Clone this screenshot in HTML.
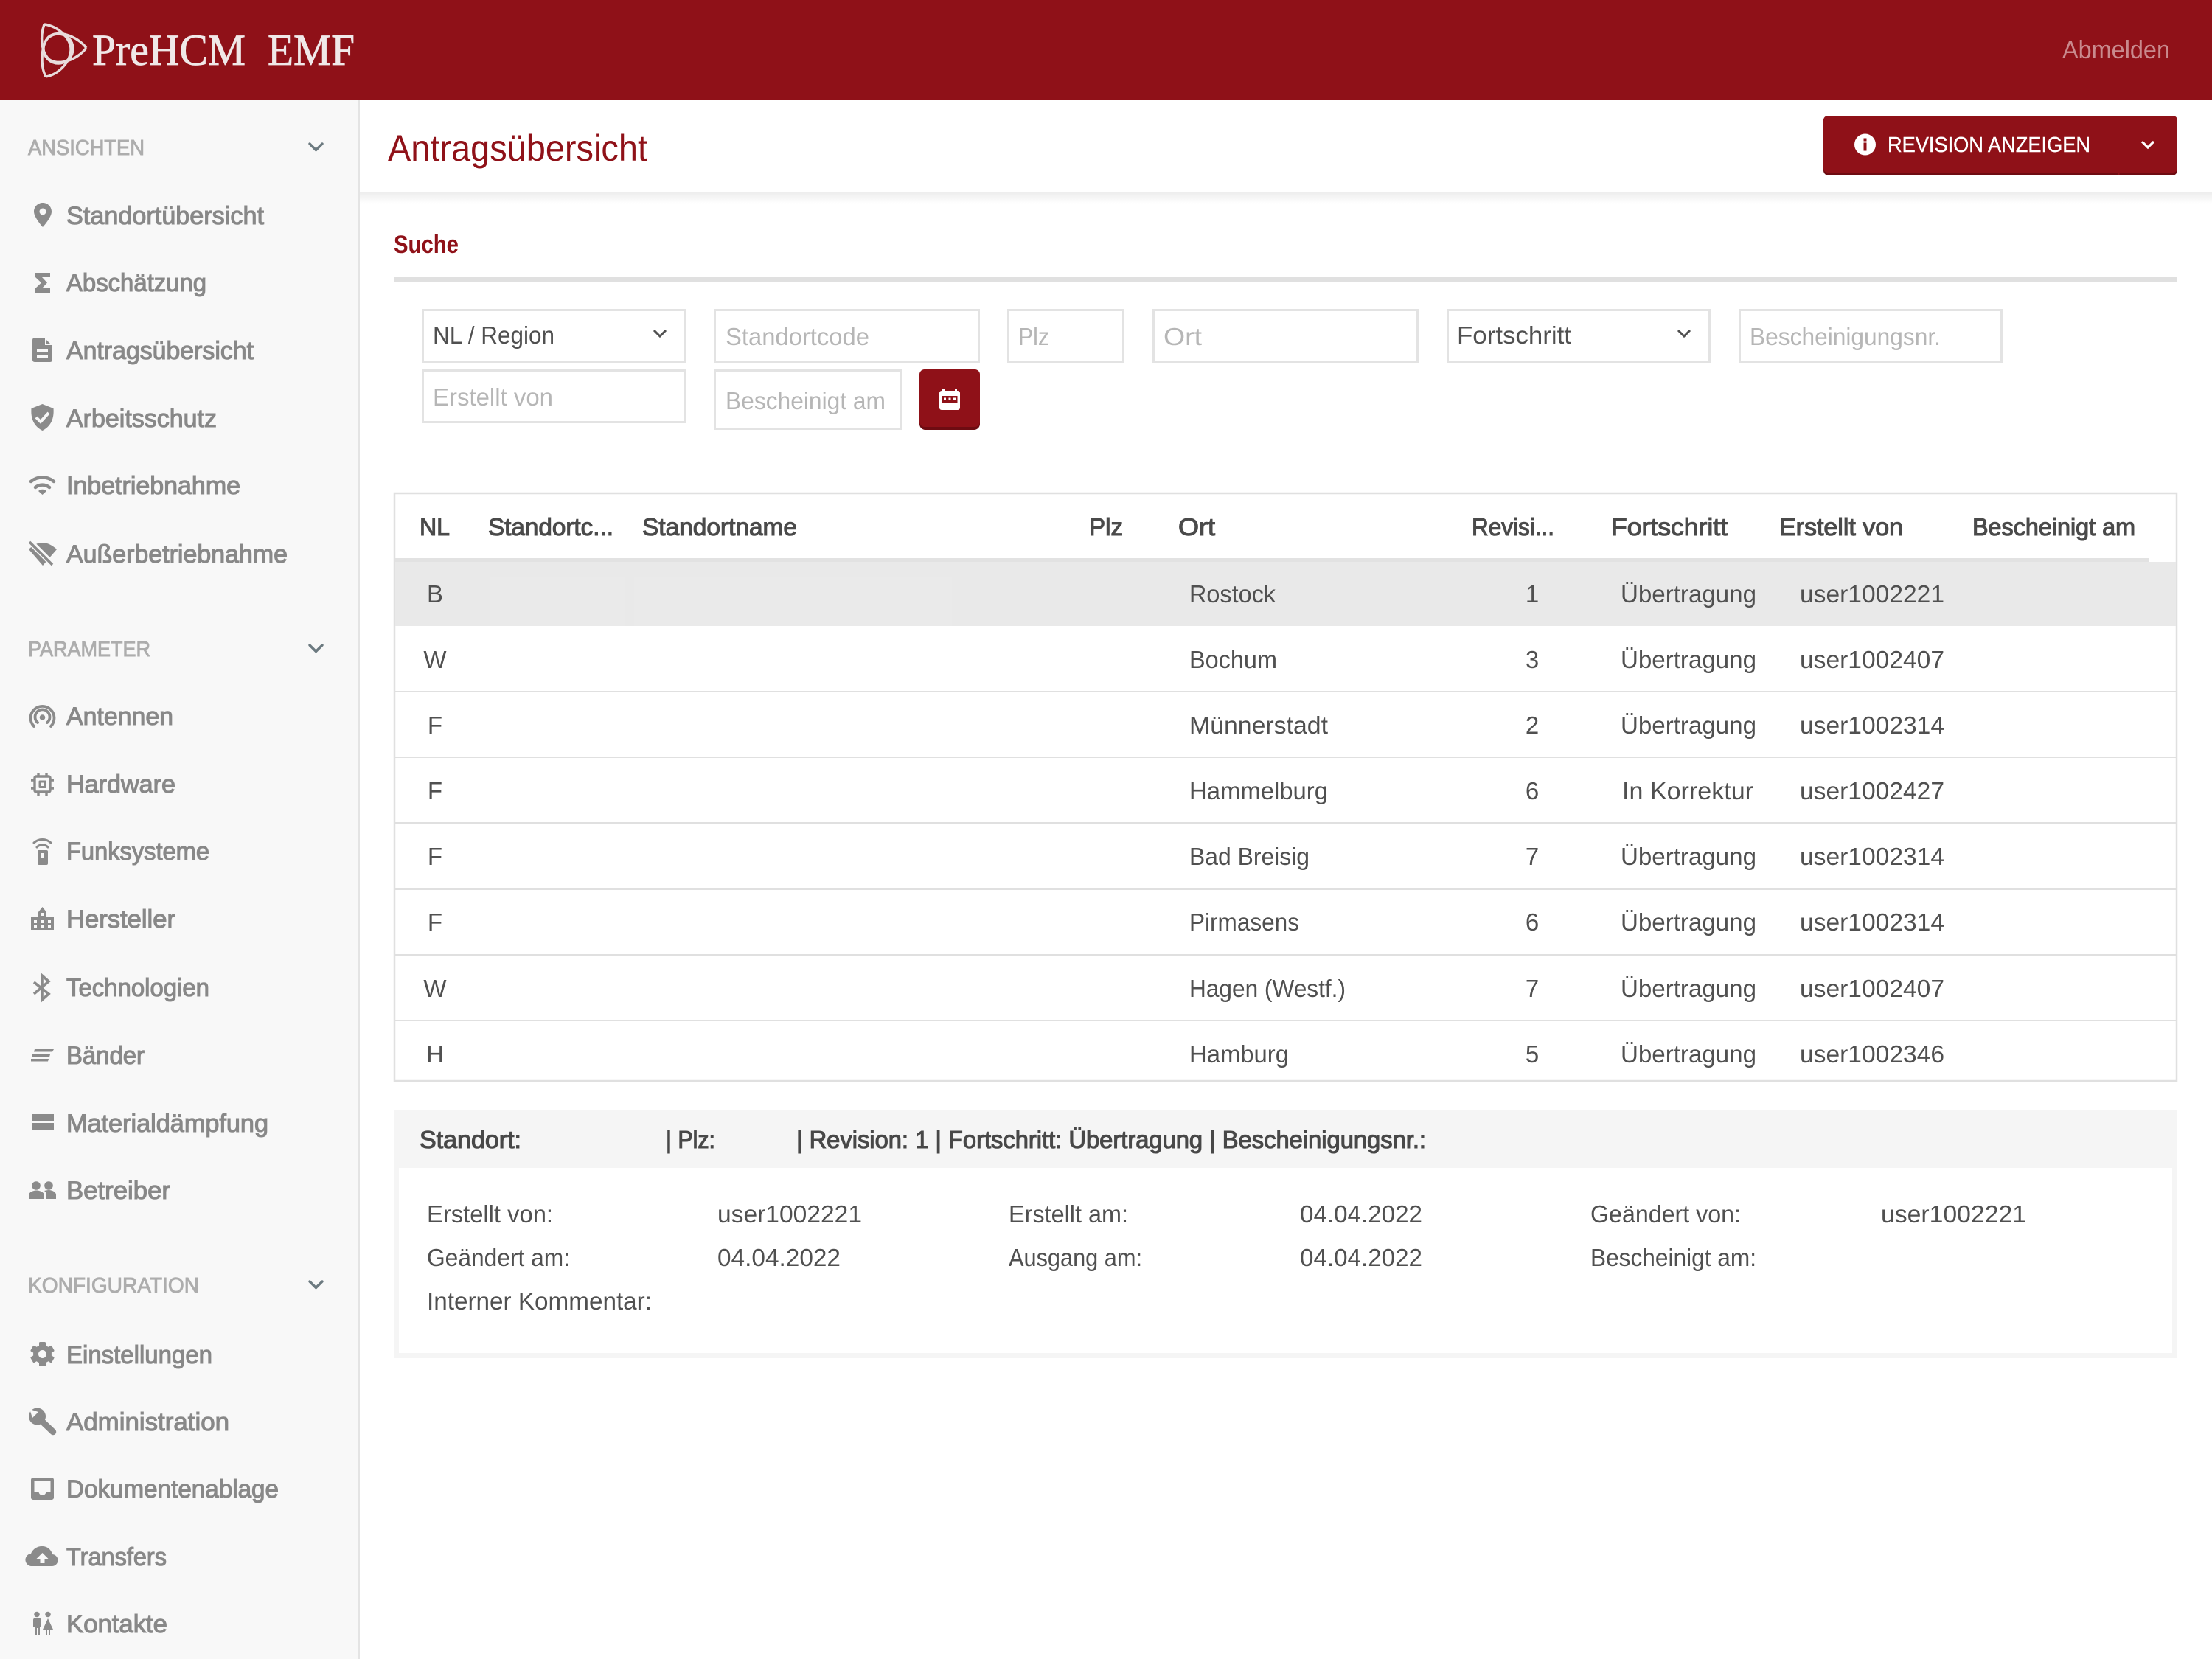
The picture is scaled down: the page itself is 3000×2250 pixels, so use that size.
<!DOCTYPE html>
<html lang="de">
<head>
<meta charset="utf-8">
<title>PreHCM EMF</title>
<style>
html,body{margin:0;padding:0;background:#fff;width:3000px;height:2250px;overflow:hidden}
svg{display:block}
text{font-family:"Liberation Sans",sans-serif;font-size:34px;fill:#565656}
.n{fill:#888;stroke:#888;stroke-width:1.1px}
.h{font-size:29px;fill:#adadad;stroke:#adadad;stroke-width:.9px}
.th{fill:#4a4a4a;stroke:#4a4a4a;stroke-width:1.1px;font-size:33px}
.ph{fill:#b6b6b6;font-size:33px}
.v{fill:#505050;font-size:33px}
.b{fill:#484848;stroke:#484848;stroke-width:1.1px;font-size:33px}
.i{fill:#8b8b8b}
.l{fill:none;stroke:#8b8b8b;stroke-linecap:round;stroke-linejoin:round}
.c{fill:none;stroke:#6c7a80;stroke-width:3.4;stroke-linecap:round;stroke-linejoin:round}
.f{fill:#fff;stroke:#e3e3e3;stroke-width:3}
</style>
</head>
<body>
<svg width="3000" height="2250" viewBox="0 0 3000 2250" xmlns="http://www.w3.org/2000/svg">
<defs>
<linearGradient id="sh" x1="0" y1="0" x2="0" y2="1"><stop offset="0" stop-color="#ececec"/><stop offset="1" stop-color="#ffffff"/></linearGradient>
</defs>
<rect width="3000" height="2250" fill="#fff"/>

<!-- header -->
<rect width="3000" height="136" fill="#8f1118"/>
<g fill="none" stroke="#e8dcdc" stroke-width="3.400" stroke-linejoin="round">
<circle cx="79" cy="66" r="20"/>
<path d="M60 33C78 35 97 52 96 68C95 84 80 101 62 104"/>
<path d="M60 33C54 50 56 70 66 80C78 90 104 82 117 65"/>
<path d="M62 104C54 88 56 60 66 50C78 40 104 48 117 65"/>
</g>
<text x="125" y="88" textLength="208" lengthAdjust="spacingAndGlyphs" style="font-family:'Liberation Serif',serif;font-size:60px;fill:#f0e8e8;stroke:#f0e8e8;stroke-width:.8px">PreHCM</text>
<text x="363" y="88" textLength="118" lengthAdjust="spacingAndGlyphs" style="font-family:'Liberation Serif',serif;font-size:60px;fill:#f0e8e8;stroke:#f0e8e8;stroke-width:.8px">EMF</text>
<text x="2797" y="79" textLength="146" lengthAdjust="spacingAndGlyphs" style="fill:#c98a8d">Abmelden</text>

<!-- sidebar -->
<rect x="0" y="136" width="486" height="2114" fill="#f8f8f8"/>
<rect x="486" y="136" width="2" height="2114" fill="#e4e4e4"/>

<text class="h" x="38" y="210" textLength="158" lengthAdjust="spacingAndGlyphs">ANSICHTEN</text>
<polyline class="c" points="420,195 428.5,203.5 437,195"/>
<text class="h" x="38" y="890" textLength="166" lengthAdjust="spacingAndGlyphs">PARAMETER</text>
<polyline class="c" points="420,875 428.5,883.5 437,875"/>
<text class="h" x="38" y="1753" textLength="232" lengthAdjust="spacingAndGlyphs">KONFIGURATION</text>
<polyline class="c" points="420,1738 428.5,1746.5 437,1738"/>

<text class="n" x="90" y="304" textLength="268" lengthAdjust="spacingAndGlyphs">Standortübersicht</text>
<text class="n" x="90" y="395" textLength="190" lengthAdjust="spacingAndGlyphs">Abschätzung</text>
<text class="n" x="90" y="487" textLength="254" lengthAdjust="spacingAndGlyphs">Antragsübersicht</text>
<text class="n" x="90" y="579" textLength="204" lengthAdjust="spacingAndGlyphs">Arbeitsschutz</text>
<text class="n" x="90" y="670" textLength="236" lengthAdjust="spacingAndGlyphs">Inbetriebnahme</text>
<text class="n" x="90" y="763" textLength="300" lengthAdjust="spacingAndGlyphs">Außerbetriebnahme</text>
<text class="n" x="90" y="983" textLength="145" lengthAdjust="spacingAndGlyphs">Antennen</text>
<text class="n" x="90" y="1075" textLength="148" lengthAdjust="spacingAndGlyphs">Hardware</text>
<text class="n" x="90" y="1166" textLength="194" lengthAdjust="spacingAndGlyphs">Funksysteme</text>
<text class="n" x="90" y="1258" textLength="148" lengthAdjust="spacingAndGlyphs">Hersteller</text>
<text class="n" x="90" y="1351" textLength="194" lengthAdjust="spacingAndGlyphs">Technologien</text>
<text class="n" x="90" y="1443" textLength="106" lengthAdjust="spacingAndGlyphs">Bänder</text>
<text class="n" x="90" y="1535" textLength="274" lengthAdjust="spacingAndGlyphs">Materialdämpfung</text>
<text class="n" x="90" y="1626" textLength="141" lengthAdjust="spacingAndGlyphs">Betreiber</text>
<text class="n" x="90" y="1849" textLength="198" lengthAdjust="spacingAndGlyphs">Einstellungen</text>
<text class="n" x="90" y="1940" textLength="221" lengthAdjust="spacingAndGlyphs">Administration</text>
<text class="n" x="90" y="2031" textLength="288" lengthAdjust="spacingAndGlyphs">Dokumentenablage</text>
<text class="n" x="90" y="2123" textLength="136" lengthAdjust="spacingAndGlyphs">Transfers</text>
<text class="n" x="90" y="2214" textLength="137" lengthAdjust="spacingAndGlyphs">Kontakte</text>

<!-- sidebar icons -->
<path class="i" fill-rule="evenodd" d="M58 275c-6.6 0-12 5.4-12 12c0 8 12 21 12 21s12-13 12-21c0-6.6-5.4-12-12-12zM58 282.500a4.500 4.500 0 1 1 0 9a4.500 4.500 0 0 1 0-9z"/>
<path class="i" d="M47 370h21v6H57l7 7.500-7 7.500h11v6H47v-5l9-8.500-9-8.500z"/>
<path class="i" d="M47 458h13l11 11v19a3 3 0 0 1-3 3H47a3 3 0 0 1-3-3V461a3 3 0 0 1 3-3z"/>
<path d="M62 458v9h9" fill="none" stroke="#f8f8f8" stroke-width="2"/>
<rect x="50" y="473" width="15" height="4" fill="#f8f8f8"/><rect x="50" y="481" width="15" height="4" fill="#f8f8f8"/>
<path class="i" d="M57.500 548l15 6c1 13-3 24-15 30c-12-6-16-17-15-30z"/>
<polyline points="49,566 55,572 66,560" fill="none" stroke="#f8f8f8" stroke-width="4"/>
<g class="l" stroke-width="4.500" style="fill:none"><path d="M42 653a24 24 0 0 1 31 0"/><path d="M48 661a15 15 0 0 1 19 0"/></g>
<path class="i" d="M52 666l5.500 5 5.500-5a8 8 0 0 0-11 0z"/>
<path class="i" d="M39 745Q57 727 77 745L58 767z"/>
<line x1="40" y1="734" x2="72" y2="766" stroke="#f8f8f8" stroke-width="8"/>
<line x1="40" y1="735" x2="71" y2="766" stroke="#8b8b8b" stroke-width="3.500"/>
<g class="l" stroke-width="3.800"><path d="M46 985a16 16 0 1 1 23 0"/><path d="M51 980a10 10 0 1 1 13 0"/></g>
<circle class="i" cx="57.500" cy="973" r="3.800"/>
<g class="l" stroke-width="3.400" style="stroke-linecap:butt">
<rect x="47" y="1053" width="21" height="21" rx="2"/><rect x="54" y="1060" width="7.500" height="7.500" stroke-width="3"/>
<path d="M52 1048v5M63 1048v5M52 1074v5M63 1074v5M42 1058h5M42 1069h5M68 1058h5M68 1069h5"/></g>
<g class="l" stroke-width="3"><path d="M46 1143a17 17 0 0 1 23 0"/><path d="M50 1149a10 10 0 0 1 15 0"/></g>
<path class="i" fill-rule="evenodd" d="M52 1153h11a2 2 0 0 1 2 2v16a2 2 0 0 1-2 2H53a2 2 0 0 1-2-2v-16a2 2 0 0 1 1-2zM55 1157v6h5v-6z"/>
<path class="i" fill-rule="evenodd" d="M42 1244h10v-7l5.500-7 5.500 7v7h10v17H42zM46 1248v4h4v-4zM55.500 1248v4h4v-4zM65 1248v4h4v-4zM46 1255v3h4v-3zM55.500 1255v3h4v-3zM65 1255v3h4v-3zM55.500 1238v4h4v-4z"/>
<path d="M46 1332L66 1348L57 1356V1323L66 1331L46 1348" fill="none" stroke="#8b8b8b" stroke-width="3.600"/>
<path class="i" d="M47 1423h26l-2 3.500H46zM44 1430h24l-1 3.500H43zM42 1436h24l-1 3.500H42z"/>
<rect class="i" x="44" y="1511" width="29" height="9.500"/><rect class="i" x="44" y="1523" width="29" height="10"/>
<circle class="i" cx="49" cy="1608" r="5.800"/><circle class="i" cx="66" cy="1608" r="5.800"/>
<path class="i" d="M39 1626v-5c0-4 6-6.500 10.500-6.500s10.500 2.500 10.500 6.500v5zM63 1626v-5c0-2.500-1-4.500-3-6c2-.5 4-1 6-1c4.500 0 10 2.500 10 6.500v5.500z"/>
<g class="i"><circle cx="57.500" cy="1836.500" r="12.500"/><rect x="53" y="1820" width="9" height="33" rx="1.500"/><rect x="53" y="1820" width="9" height="33" rx="1.500" transform="rotate(60 57.500 1836.500)"/><rect x="53" y="1820" width="9" height="33" rx="1.500" transform="rotate(120 57.500 1836.500)"/></g>
<circle cx="57.500" cy="1836.500" r="5.500" fill="#f8f8f8"/>
<circle class="i" cx="50.500" cy="1921" r="11.500"/>
<polygon points="52,1915 44,1923 36,1899 28,1907" fill="#f8f8f8"/>
<line x1="52" y1="1923" x2="72" y2="1942" stroke="#8b8b8b" stroke-width="8.500" stroke-linecap="round"/>
<path class="i" fill-rule="evenodd" d="M45 2004h25a3 3 0 0 1 3 3v24a3 3 0 0 1-3 3H45a3 3 0 0 1-3-3v-24a3 3 0 0 1 3-3zM46.500 2008v15h6a5 5 0 0 0 10 0h6v-15z"/>
<path class="i" d="M44 2124a7 7 0 0 1-2-17a16 16 0 0 1 15-10a14 14 0 0 1 14 11a8 8 0 0 1-1 16z"/>
<path fill="#f8f8f8" d="M57.500 2106l8 8h-5v6h-6v-6h-5z"/>
<circle class="i" cx="50" cy="2189.500" r="3.800"/><circle class="i" cx="65" cy="2189.500" r="3.800"/>
<path class="i" d="M46 2195h8a2 2 0 0 1 2 2v9h-2v12h-3v-10h-1v10h-3v-12h-2v-9a2 2 0 0 1 1-2zM65 2195l7 15h-4v8h-2v-8h-2v8h-2v-8h-4z"/>

<!-- title bar -->
<rect x="488" y="260" width="2512" height="16" fill="url(#sh)"/>
<text x="526" y="218" textLength="352" lengthAdjust="spacingAndGlyphs" style="font-size:50px;fill:#8f1118">Antragsübersicht</text>
<rect x="2473" y="157" width="480" height="81" rx="7" fill="#6e0c12"/>
<rect x="2473" y="157" width="480" height="77" rx="6" fill="#8f1118"/>
<rect x="2873" y="234" width="1.500" height="4" fill="#8f1118"/>
<circle cx="2529.500" cy="196" r="14.500" fill="#fff"/>
<rect x="2527.500" y="193.500" width="4" height="11" fill="#8f1118"/><rect x="2527.500" y="187.500" width="4" height="4" fill="#8f1118"/>
<text x="2560" y="206" textLength="275" lengthAdjust="spacingAndGlyphs" style="font-size:29px;fill:#fff;stroke:#fff;stroke-width:.4px">REVISION ANZEIGEN</text>
<polyline points="2905,192 2913,200 2921,192" fill="none" stroke="#fff" stroke-width="3.200"/>

<!-- search -->
<text x="534" y="343" textLength="88" lengthAdjust="spacingAndGlyphs" style="font-weight:bold;font-size:34px;fill:#8f1118">Suche</text>
<rect x="534" y="375" width="2419" height="7" fill="#e0e0e0"/>

<rect class="f" x="573.500" y="420.500" width="355" height="70"/>
<text class="v" x="587" y="466" textLength="165" lengthAdjust="spacingAndGlyphs">NL / Region</text>
<polyline points="887,448 895,456 903,448" fill="none" stroke="#505050" stroke-width="3"/>
<rect class="f" x="969.500" y="420.500" width="358" height="70"/>
<text class="ph" x="984" y="468" textLength="195" lengthAdjust="spacingAndGlyphs">Standortcode</text>
<rect class="f" x="1367.500" y="420.500" width="156" height="70"/>
<text class="ph" x="1381" y="468" textLength="42" lengthAdjust="spacingAndGlyphs">Plz</text>
<rect class="f" x="1564.500" y="420.500" width="358" height="70"/>
<text class="ph" x="1578" y="468" textLength="52" lengthAdjust="spacingAndGlyphs">Ort</text>
<rect class="f" x="1963.500" y="420.500" width="355" height="70"/>
<text class="v" x="1976" y="466" textLength="155" lengthAdjust="spacingAndGlyphs">Fortschritt</text>
<polyline points="2276,448 2284,456 2292,448" fill="none" stroke="#505050" stroke-width="3"/>
<rect class="f" x="2359.500" y="420.500" width="355" height="70"/>
<text class="ph" x="2373" y="468" textLength="259" lengthAdjust="spacingAndGlyphs">Bescheinigungsnr.</text>
<rect class="f" x="573.500" y="502.500" width="355" height="70"/>
<text class="ph" x="587" y="550" textLength="163" lengthAdjust="spacingAndGlyphs">Erstellt von</text>
<rect class="f" x="969.500" y="502.500" width="252" height="79"/>
<text class="ph" x="984" y="555" textLength="217" lengthAdjust="spacingAndGlyphs">Bescheinigt am</text>
<rect x="1247" y="501" width="82" height="82" rx="8" fill="#6e0c12"/>
<rect x="1247" y="501" width="82" height="78" rx="7" fill="#8f1118"/>
<path fill="#fff" d="M1278 527h3v3h14v-3h3v3h1a3 3 0 0 1 3 3v20a3 3 0 0 1-3 3h-22a3 3 0 0 1-3-3v-20a3 3 0 0 1 3-3h1z"/>
<rect x="1277.500" y="537" width="21" height="10" fill="#8f1118"/>
<g fill="#fff"><rect x="1280" y="539.500" width="3" height="3"/><rect x="1286.500" y="539.500" width="3" height="3"/><rect x="1293" y="539.500" width="3" height="3"/></g>

<!-- table -->
<rect x="535" y="669" width="2417" height="797" fill="#fff" stroke="#e0e0e0" stroke-width="2.500"/>
<rect x="536" y="762" width="2415" height="87" fill="#e9e9e9"/>
<rect x="536" y="757" width="2379" height="5" fill="#e2e2e2"/>
<rect x="665" y="783" width="183" height="66" fill="#eaeaea"/>
<rect x="860" y="783" width="431" height="66" fill="#eaeaea"/>
<g fill="#e0e0e0">
<rect x="536" y="937" width="2415" height="2"/><rect x="536" y="1026" width="2415" height="2"/><rect x="536" y="1115" width="2415" height="2"/><rect x="536" y="1205" width="2415" height="2"/><rect x="536" y="1294" width="2415" height="2"/><rect x="536" y="1383" width="2415" height="2"/>
</g>
<text class="th" x="569" y="726" textLength="41" lengthAdjust="spacingAndGlyphs">NL</text>
<text class="th" x="662" y="726" textLength="170" lengthAdjust="spacingAndGlyphs">Standortc...</text>
<text class="th" x="871" y="726" textLength="210" lengthAdjust="spacingAndGlyphs">Standortname</text>
<text class="th" x="1477" y="726" textLength="46" lengthAdjust="spacingAndGlyphs">Plz</text>
<text class="th" x="1598" y="726" textLength="50" lengthAdjust="spacingAndGlyphs">Ort</text>
<text class="th" x="1996" y="726" textLength="112" lengthAdjust="spacingAndGlyphs">Revisi...</text>
<text class="th" x="2185" y="726" textLength="158" lengthAdjust="spacingAndGlyphs">Fortschritt</text>
<text class="th" x="2413" y="726" textLength="168" lengthAdjust="spacingAndGlyphs">Erstellt von</text>
<text class="th" x="2675" y="726" textLength="221" lengthAdjust="spacingAndGlyphs">Bescheinigt am</text>

<g class="rows">
<text class="v" x="590" y="817" text-anchor="middle">B</text>
<text class="v" x="1613" y="817" textLength="117" lengthAdjust="spacingAndGlyphs">Rostock</text>
<text class="v" x="2078" y="817" text-anchor="middle">1</text>
<text class="v" x="2198" y="817" textLength="184" lengthAdjust="spacingAndGlyphs">Übertragung</text>
<text class="v" x="2441" y="817" textLength="196" lengthAdjust="spacingAndGlyphs">user1002221</text>

<text class="v" x="590" y="906" text-anchor="middle">W</text>
<text class="v" x="1613" y="906" textLength="119" lengthAdjust="spacingAndGlyphs">Bochum</text>
<text class="v" x="2078" y="906" text-anchor="middle">3</text>
<text class="v" x="2198" y="906" textLength="184" lengthAdjust="spacingAndGlyphs">Übertragung</text>
<text class="v" x="2441" y="906" textLength="196" lengthAdjust="spacingAndGlyphs">user1002407</text>

<text class="v" x="590" y="995" text-anchor="middle">F</text>
<text class="v" x="1613" y="995" textLength="188" lengthAdjust="spacingAndGlyphs">Münnerstadt</text>
<text class="v" x="2078" y="995" text-anchor="middle">2</text>
<text class="v" x="2198" y="995" textLength="184" lengthAdjust="spacingAndGlyphs">Übertragung</text>
<text class="v" x="2441" y="995" textLength="196" lengthAdjust="spacingAndGlyphs">user1002314</text>

<text class="v" x="590" y="1084" text-anchor="middle">F</text>
<text class="v" x="1613" y="1084" textLength="188" lengthAdjust="spacingAndGlyphs">Hammelburg</text>
<text class="v" x="2078" y="1084" text-anchor="middle">6</text>
<text class="v" x="2200" y="1084" textLength="178" lengthAdjust="spacingAndGlyphs">In Korrektur</text>
<text class="v" x="2441" y="1084" textLength="196" lengthAdjust="spacingAndGlyphs">user1002427</text>

<text class="v" x="590" y="1173" text-anchor="middle">F</text>
<text class="v" x="1613" y="1173" textLength="163" lengthAdjust="spacingAndGlyphs">Bad Breisig</text>
<text class="v" x="2078" y="1173" text-anchor="middle">7</text>
<text class="v" x="2198" y="1173" textLength="184" lengthAdjust="spacingAndGlyphs">Übertragung</text>
<text class="v" x="2441" y="1173" textLength="196" lengthAdjust="spacingAndGlyphs">user1002314</text>

<text class="v" x="590" y="1262" text-anchor="middle">F</text>
<text class="v" x="1613" y="1262" textLength="149" lengthAdjust="spacingAndGlyphs">Pirmasens</text>
<text class="v" x="2078" y="1262" text-anchor="middle">6</text>
<text class="v" x="2198" y="1262" textLength="184" lengthAdjust="spacingAndGlyphs">Übertragung</text>
<text class="v" x="2441" y="1262" textLength="196" lengthAdjust="spacingAndGlyphs">user1002314</text>

<text class="v" x="590" y="1352" text-anchor="middle">W</text>
<text class="v" x="1613" y="1352" textLength="212" lengthAdjust="spacingAndGlyphs">Hagen (Westf.)</text>
<text class="v" x="2078" y="1352" text-anchor="middle">7</text>
<text class="v" x="2198" y="1352" textLength="184" lengthAdjust="spacingAndGlyphs">Übertragung</text>
<text class="v" x="2441" y="1352" textLength="196" lengthAdjust="spacingAndGlyphs">user1002407</text>

<text class="v" x="590" y="1441" text-anchor="middle">H</text>
<text class="v" x="1613" y="1441" textLength="135" lengthAdjust="spacingAndGlyphs">Hamburg</text>
<text class="v" x="2078" y="1441" text-anchor="middle">5</text>
<text class="v" x="2198" y="1441" textLength="184" lengthAdjust="spacingAndGlyphs">Übertragung</text>
<text class="v" x="2441" y="1441" textLength="196" lengthAdjust="spacingAndGlyphs">user1002346</text>
</g>

<!-- detail panel -->
<rect x="534" y="1505" width="2419" height="337" fill="#f5f5f5"/>
<rect x="541" y="1584" width="2405" height="251" fill="#fff"/>
<text class="b" x="569" y="1557" textLength="138" lengthAdjust="spacingAndGlyphs">Standort:</text>
<text class="b" x="903" y="1557" textLength="67" lengthAdjust="spacingAndGlyphs">| Plz:</text>
<text class="b" x="1080" y="1557" textLength="854" lengthAdjust="spacingAndGlyphs">| Revision: 1 | Fortschritt: Übertragung | Bescheinigungsnr.:</text>

<text class="v" x="579" y="1658" textLength="171" lengthAdjust="spacingAndGlyphs">Erstellt von:</text>
<text class="v" x="973" y="1658" textLength="196" lengthAdjust="spacingAndGlyphs">user1002221</text>
<text class="v" x="1368" y="1658" textLength="162" lengthAdjust="spacingAndGlyphs">Erstellt am:</text>
<text class="v" x="1763" y="1658" textLength="166" lengthAdjust="spacingAndGlyphs">04.04.2022</text>
<text class="v" x="2157" y="1658" textLength="204" lengthAdjust="spacingAndGlyphs">Geändert von:</text>
<text class="v" x="2551" y="1658" textLength="197" lengthAdjust="spacingAndGlyphs">user1002221</text>

<text class="v" x="579" y="1717" textLength="194" lengthAdjust="spacingAndGlyphs">Geändert am:</text>
<text class="v" x="973" y="1717" textLength="167" lengthAdjust="spacingAndGlyphs">04.04.2022</text>
<text class="v" x="1368" y="1717" textLength="181" lengthAdjust="spacingAndGlyphs">Ausgang am:</text>
<text class="v" x="1763" y="1717" textLength="166" lengthAdjust="spacingAndGlyphs">04.04.2022</text>
<text class="v" x="2157" y="1717" textLength="225" lengthAdjust="spacingAndGlyphs">Bescheinigt am:</text>

<text class="v" x="579" y="1776" textLength="305" lengthAdjust="spacingAndGlyphs">Interner Kommentar:</text>
</svg>
</body>
</html>
